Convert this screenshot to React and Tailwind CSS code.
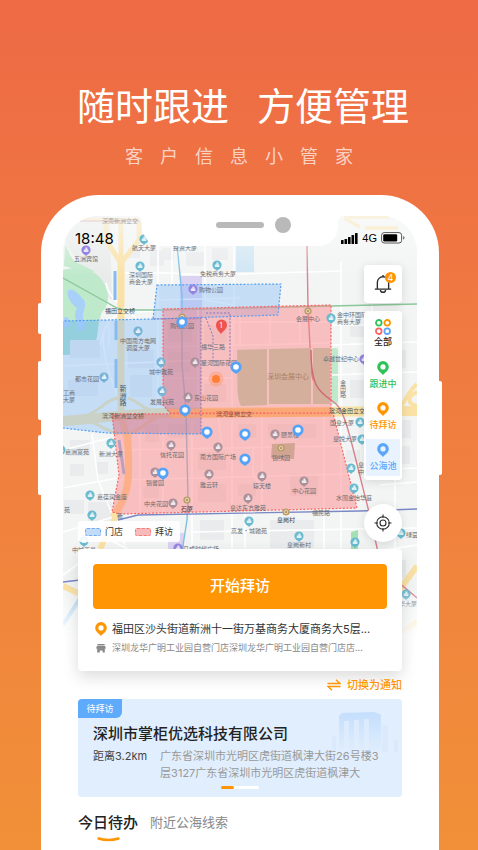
const POI_COLORS = { teal: '#6bbbd0', gray: '#ab8f9a', purple: '#9583e2', blue: '#78b3d6' };

const pois = [
  [86, 250, 'purple'], [144, 239, 'teal'], [140, 266, 'teal'], [217, 265, 'teal'], [193, 289, 'purple'],
  [138, 331, 'blue'], [195, 362, 'gray'], [161, 362, 'blue'], [104, 377, 'blue'], [162, 391, 'blue'],
  [188, 397, 'gray'], [61, 450, 'teal'], [111, 443, 'teal'], [171, 445, 'gray'], [218, 447, 'gray'],
  [155, 472, 'gray'], [209, 474, 'gray'], [90, 495, 'teal'], [173, 503, 'gray'], [248, 498, 'gray'],
  [249, 521, 'teal'], [92, 515, 'teal'], [331, 318, 'teal'], [364, 359, 'purple'], [360, 422, 'teal'],
  [362, 439, 'teal'], [351, 468, 'teal'], [275, 434, 'gray'], [262, 476, 'gray'], [304, 481, 'gray'],
  [354, 488, 'teal'], [299, 536, 'teal'], [401, 533, 'teal'], [355, 542, 'teal'], [84, 541, 'teal'],
  [178, 548, 'purple'], [406, 594, 'teal'],
];

const labels = [
  [120, 223, '深南新洲立交', '#a3a3a3'], [86, 261, '五洲宾馆'], [144, 250, '航天大厦'], [185, 250, '投资大厦'],
  [141, 277, '深圳国际'], [141, 284, '商会大厦'], [218, 276, '免税商务大厦'], [211, 292, '购物公园'],
  [120, 313, '福田立交桥', '#3f4448'], [138, 343, '中国南方电网'], [138, 350, '调度大厦'], [182, 328, '购物公园'],
  [213, 349, '福华三路'], [219, 365, '星河国际花园'], [161, 374, '城中雅苑'], [87, 381, '都市花园'],
  [69, 395, '工商'], [69, 402, '大厦'], [162, 404, '发展兴苑'], [206, 400, '东山花园'],
  [123, 418, '滨河新洲立交桥', '#5b5f55'], [234, 416, '滨河皇岗立交', '#80504a'],
  [77, 454, '嘉洲富苑'], [111, 456, '新洲大厦'], [172, 457, '信托花园'], [218, 459, '南方国际广场'],
  [155, 485, '锦馨园'], [209, 487, '雅云轩'], [112, 499, '嘉葆润金座'], [156, 506, '中央花园'],
  [187, 511, '石厦', '#54383c'], [248, 510, '皇达东方雅苑'], [249, 533, '高发·城驰苑'], [67, 512, '苑'],
  [120, 518, '新', '#46586b'], [308, 321, '会展中心'], [352, 317, '金中环国际'], [349, 324, '商务大厦'],
  [341, 361, '卓越世纪中心'], [347, 413, '滨河金田立交', '#41464c'],
  [342, 425, '国皇大厦'], [345, 441, '皇悦大厦'], [364, 467, '皇岗'], [364, 474, '中心'], [290, 437, '颐景楼'],
  [281, 460, '锦绣园'], [262, 488, '琼天楼'], [304, 493, '中心花园'], [354, 500, '水围金怡华庭'],
  [321, 515, '福民路'], [286, 522, '皇岗村', '#3f4448'], [299, 547, '皇岗新村'], [412, 537, '绿茵'],
  [84, 552, '中城天邑'], [201, 551, '马成时代广场'], [408, 606, '华大厦'],
];

const visitPins = [[182, 322], [236, 367], [185, 410], [207, 432], [163, 473], [245, 434], [245, 459], [298, 430]];

const minorRoads = [
  'M63 366L200 360', 'M158 245L158 410', 'M125 273H170L205 275L341 271', 'M172 245V284', 'M205 245V300L232 305V410',
  'M158 300L240 298', 'M234 245V345', 'M341 262V560', 'M163 347L331 343', 'M198 310V410', 'M163 378H232',
  'M331 345L417 342', 'M331 375L417 372', 'M372 304V440', 'M331 325H364', 'M63 488L118 478', 'M92 434L98 480L125 545',
  'M63 450L110 438', 'M140 420V512', 'M163 434V512', 'M192 420V560', 'M232 420V560', 'M262 416V510', 'M324 414V560',
  'M115 450L340 446', 'M118 480L350 474', 'M192 532L417 528', 'M63 532L120 515', 'M245 511V548', 'M370 470L417 468',
  'M380 485L417 482', 'M395 470V548', 'M63 575L110 540L150 560', 'M385 550L417 545', 'M270 345V308', 'M232 322H331',
  'M240 345V308', 'M300 345V308', 'M253 446V474L262 490V510', 'M218 414L222 446',
];

const buildings = [
  [128, 248, 12, 10], [150, 250, 14, 16], [186, 252, 18, 14], [162, 248, 12, 12], [212, 248, 16, 12], [70, 440, 20, 16],
  [70, 464, 14, 12], [96, 462, 12, 12], [64, 500, 20, 14], [88, 502, 24, 20], [200, 520, 24, 20], [270, 520, 44, 28],
  [350, 325, 14, 12], [376, 350, 30, 18], [350, 380, 14, 18], [377, 420, 34, 18], [374, 446, 36, 18], [346, 450, 14, 12],
  [128, 350, 26, 18], [130, 375, 22, 22], [70, 340, 30, 18], [68, 380, 30, 16], [168, 320, 24, 22], [168, 352, 22, 20],
  [204, 325, 22, 18], [204, 384, 22, 18], [145, 424, 14, 18], [168, 424, 20, 14], [198, 452, 28, 18], [238, 424, 18, 14],
  [268, 424, 48, 14], [290, 474, 28, 22], [198, 484, 28, 18], [143, 486, 16, 12], [238, 484, 18, 12], [380, 560, 26, 18],
];

function MapPoi({ x, y, kind }) {
  return (
    <g>
      <path d={`M${x - 3} ${y + 3}L${x} ${y + 6}L${x + 3} ${y + 3}Z`} fill={POI_COLORS[kind]} />
      <circle cx={x} cy={y} r="4.6" fill={POI_COLORS[kind]} />
      <path d={`M${x - 2.2} ${y + 2}v-2.6h1.6v-1.8h2v2h1v2.4z`} fill="#fff" opacity=".8" />
    </g>
  );
}

function CityMap() {
  return (
    <svg
      className="absolute inset-x-0 top-0 h-[430px] w-full"
      viewBox="63 216 354 430"
      preserveAspectRatio="xMidYMin slice"
      aria-label="拜访地图"
    >
      <defs>
        <linearGradient id="fadeBottom" x1="0" y1="0" x2="0" y2="1">
          <stop offset="0" stopColor="#fff" stopOpacity="0" />
          <stop offset=".8" stopColor="#fff" stopOpacity="1" />
        </linearGradient>
        <linearGradient id="fadeTop" x1="0" y1="0" x2="0" y2="1">
          <stop offset="0" stopColor="#fafafa" stopOpacity=".7" />
          <stop offset="1" stopColor="#fafafa" stopOpacity="0" />
        </linearGradient>
      </defs>
      <rect x="63" y="216" width="354" height="430" fill="#f3f5f5" />
      <path d="M63 216H110L112 300L98 290L66 245Z" fill="#e9ebeb" />
      <path d="M65 245C70 252 70 258 76 262L94 271L92 274L64 266Z" fill="#bfe9cb" />
      <path d="M63 270C75 266 94 268 102 280C110 292 110 305 102 312C98 322 98 340 92 350C84 357 74 354 63 355Z" fill="#bfe9cb" />
      <path d="M63 321L98 320C98 335 96 347 90 351C82 356 74 354 63 355Z" fill="#9cdcc8" />
      <path d="M68 290C74 287 80 296 84 300C88 308 80 312 84 320C88 328 80 334 77 330C79 322 72 318 77 308C72 304 66 298 68 290ZM64 318c4-3 6 2 7 8l-7 2z" fill="#a8d0f8" />
      <rect x="236" y="245" width="18" height="27" fill="#cfe6f4" />
      <rect x="180" y="276" width="22" height="44" fill="#dcd2f2" />
      <rect x="331" y="348" width="7" height="56" rx="2" fill="#bfe9cb" />
      <path d="M351 532L358 530V552H351Z" fill="#a5e0b4" />
      <path d="M168 533h16v16h-16z" fill="#dcd2f2" />
      <g fill="#e9ebec">
        {buildings.map(([x, y, w, h]) => (
          <rect key={`${x}-${y}`} x={x} y={y} width={w} height={h} rx="1" />
        ))}
      </g>
      <g fill="none" stroke="#fff" strokeWidth="1.6">
        {minorRoads.map((d) => (
          <path key={d} d={d} />
        ))}
        <path d="M106 283C112 310 132 300 140 330M100 345C108 310 118 312 160 311M108 345C114 320 100 318 104 350C108 380 118 390 122 410" />
      </g>
      <g fill="none" stroke="#fae2a6" strokeLinejoin="round">
        <path d="M80 220H140M344 218L360 227M365 228H398M344 217H390" strokeWidth="3.5" />
        <path d="M106 222V240L120 262M139 222V240L122 262M121 222V262" strokeWidth="5" />
        <path d="M121 256V405C121 425 127 430 128 450C129 480 130 490 113 517" strokeWidth="7" />
        <path d="M63 421C100 419 110 415 160 413L417 411" strokeWidth="10" />
        <path d="M85 416C100 412 104 400 118 398M128 398C140 402 144 410 156 412M92 422C104 428 110 432 120 434M130 434C140 430 146 422 156 418" strokeWidth="3" />
        <path d="M417 384C407 392 406 402 399 408M417 392C407 396 407 404 417 406" strokeWidth="4" />
        <path d="M63 586L84 596M100 549L118 512M398 592L417 566M392 640L417 622" strokeWidth="6" />
      </g>
      <path d="M63 625L84 592" stroke="#b0d8f5" strokeWidth="4" />
      <path d="M115 271V300M116 321V340M116 359V388M119 440L124 474" stroke="#85b9ef" strokeWidth="3" fill="none" />
      <path d="M80 221H140" stroke="#b48bb8" strokeWidth="1" />
      <path d="M63 278L108 303C116 308 120 310 130 310L163 310L331 306L417 304" fill="none" stroke="#8cc79a" strokeWidth="1.3" />
      <path d="M177 245L182 295V365L186 410L188 500L187 520L182 552" fill="none" stroke="#7fbfe0" strokeWidth="1.4" />
      <path d="M63 582L80 580M118 520L138 515L360 511L417 509" fill="none" stroke="#7a88c4" strokeWidth="1.3" />
      <path d="M307 245L308 308L311 365C311 385 318 391 335 403C346 412 350 438 368 508L378 552M398 582L417 598" fill="none" stroke="#d98290" strokeWidth="1.4" />

      <path d="M63 321L153 319L201 318V434L107 433L63 428Z" fill="#89bdf8" fillOpacity=".42" />
      <path d="M157 285L281 284L278 315L153 319Z" fill="#89bdf8" fillOpacity=".42" />
      <path d="M163 309L331 305V413H170L163 405Z" fill="#ff7f80" fillOpacity=".45" />
      <path d="M112 414L333 413L357 508L120 514L112 512L119 475Z" fill="#ff7f80" fillOpacity=".45" />
      <path d="M163 319L201 318V434H114L112 414H170L163 405Z" fill="#a0506e" fillOpacity=".14" />
      <g fill="#d4b09c">
        <path d="M237 350L267 349V405L241 406C236 396 238 386 237 350Z" />
        <path d="M269 349L311 348V404H269Z" />
        <path d="M313 348H330V404H313Z" />
        <path d="M272 444L295 443L294 459L271 458Z" fill="#d2a593" />
      </g>
      <path d="M311 350C311 385 318 391 331 400" fill="none" stroke="#cf6670" strokeWidth="1.4" />
      <path d="M128 434C129 480 131 488 117 512" fill="none" stroke="#fba97c" strokeOpacity=".5" strokeWidth="7" />
      <path d="M170 413.500L331 412" stroke="#fba36b" strokeOpacity=".7" strokeWidth="9" />
      <g fill="none" strokeWidth="1.2" strokeDasharray="2 1.6">
        <path d="M153 319L63 321M63 428L107 433L201 434M157 285L281 284L278 315L153 319Z" stroke="#539ff2" />
        <path d="M153 319L201 318V434M206 313H230V365M206 318L213 336V362" stroke="#8478bd" strokeWidth="1" />
        <path d="M163 309L331 305V413H170L163 405ZM112 414L333 413L357 508L120 514L112 512L119 475Z" stroke="#fa6566" />
      </g>
      <rect x="63" y="216" width="354" height="60" fill="url(#fadeTop)" />

      {pois.map(([x, y, kind]) => (
        <MapPoi key={`${x}-${y}`} x={x} y={y} kind={kind} />
      ))}
      {[[182, 317], [308, 311], [187, 500], [281, 448], [286, 512]].map(([x, y]) => (
        <g key={`${x}-${y}`}>
          <circle cx={x} cy={y} r="3.6" fill="#b79a66" />
          <circle cx={x} cy={y} r="1.8" fill="none" stroke="#f5e6c6" strokeWidth=".8" />
        </g>
      ))}
      <g className="font-['Noto_Sans_CJK_SC',sans-serif] text-[6px]" textAnchor="middle" fill="#6a6d73">
        {labels.map(([x, y, text, color]) => (
          <text key={`${x}-${y}`} x={x} y={y} fill={color}>{text}</text>
        ))}
        <text x="288" y="379" className="text-[7px]" fill="#a98069">深圳会展中心</text>
        <text x="123" y="395" className="text-[7px] [writing-mode:vertical-rl]" fill="#46586b">新洲路</text>
        <text x="343" y="389" className="[writing-mode:vertical-rl]">金田路</text>
      </g>

      <path d="M221 334C219 331 216 329 216 325A5.4 5.4 0 0 1 227 325C227 329 223 331 221 334Z" fill="#ee5350" />
      <text x="221" y="328" textAnchor="middle" fill="#fff" className="font-['Inter',sans-serif] text-[7px]">1</text>
      <circle cx="216" cy="379" r="7.5" fill="#ff7e35" fillOpacity=".25" />
      <circle cx="216" cy="379" r="4" fill="#ff7e35" />
      {visitPins.map(([x, y]) => (
        <g key={`${x}-${y}`}>
          <path d={`M${x - 5} ${y + 2}Q${x - 3} ${y + 5} ${x} ${y + 7}Q${x + 3} ${y + 5} ${x + 5} ${y + 2}Z`} fill="#55a3f8" />
          <circle cx={x} cy={y} r="5.6" fill="#55a3f8" />
          <circle cx={x} cy={y} r="2.8" fill="#fff" />
        </g>
      ))}
      <rect x="63" y="588" width="354" height="60" fill="url(#fadeBottom)" />
    </svg>
  );
}

function PinIcon({ className }) {
  return (
    <svg viewBox="0 0 12 14" className={className} fill="currentColor" aria-hidden="true">
      <path fillRule="evenodd" d="M6 0A5.8 5.8 0 0 1 11.8 5.8C11.8 9 9 11 6 14C3 11 .2 9 .2 5.8A5.8 5.8 0 0 1 6 0ZM6 3.3A2.6 2.6 0 1 0 6 8.5A2.6 2.6 0 1 0 6 3.3Z" />
    </svg>
  );
}

function Notch() {
  return (
    <div className="absolute inset-x-0 top-0 flex justify-center">
      <svg viewBox="0 0 204 31" className="h-[31px] w-[204px]" aria-hidden="true">
        <path d="M0 0H204C200 2 200 6 200 9C200 22 192 30 178 30H26C12 30 4 22 4 9C4 6 4 2 0 0Z" fill="#fff" />
        <rect x="78" y="6" width="48" height="6" rx="3" fill="#b9b9b9" />
        <circle cx="145" cy="9" r="8" fill="#b9b9b9" />
      </svg>
    </div>
  );
}

function StatusBar() {
  return (
    <div className="relative flex h-[44px] items-center justify-between px-[12px] text-black">
      <span className="text-[15px] leading-none">18:48</span>
      <div className="flex items-center gap-[4px]">
        <svg viewBox="0 0 17 11" className="h-[11px] w-[17px]" aria-hidden="true">
          <rect x="0" y="7" width="2.6" height="4" rx=".6" />
          <rect x="3.5" y="6" width="2.6" height="5" rx=".6" />
          <rect x="7" y="4" width="2.6" height="7" rx=".6" />
          <rect x="10.5" y="2" width="2.6" height="9" rx=".6" />
          <rect x="14" y="0" width="2.6" height="11" rx=".6" />
        </svg>
        <span className="font-['Liberation_Sans',sans-serif] text-[11px] leading-none">4G</span>
        <svg viewBox="0 0 24 12" className="h-[12px] w-[24px]" aria-hidden="true">
          <rect x=".6" y=".6" width="20" height="10.4" rx="2.6" fill="#fff" stroke="#555" />
          <rect x="2.2" y="2.2" width="14" height="7.2" rx="1.2" />
          <path d="M22 4Q23.6 4.4 23.6 5.8Q23.6 7.2 22 7.6Z" fill="#777" />
        </svg>
      </div>
    </div>
  );
}

const filters = [
  { name: '跟进中', color: 'text-[#2fc25b]' },
  { name: '待拜访', color: 'text-[#ff9502]' },
  { name: '公海池', color: 'text-[#5aa6fb]', active: true },
];

function MapControls() {
  return (
    <div className="relative mt-[5px] flex flex-col items-end gap-2">
      <button type="button" aria-label="消息" className="relative flex size-[38px] items-center justify-center rounded bg-white shadow-[0_2px_10px_rgba(0,0,0,0.12)]">
        <svg viewBox="0 0 20 22" className="size-[20px]" fill="none" stroke="#2b2b2b" strokeWidth="1.5" aria-hidden="true">
          <path d="M3.8 16.5V9.2A6.2 6.2 0 0 1 16.2 9.2V16.5M1 16.6H19M10 3V1.2" />
          <path d="M7.2 17.5C7.2 21 12.8 21 12.8 17.5" />
        </svg>
        <span className="absolute top-[7px] right-[6px] flex size-[11px] items-center justify-center rounded-full bg-[#ff9502] text-[9px] leading-none text-white">4</span>
      </button>
      <div className="flex w-[38px] flex-col rounded bg-white/95 p-[2px] pb-[4px] text-[9px] leading-[13px] font-medium shadow-[0_2px_10px_rgba(0,0,0,0.12)]">
        <button type="button" className="flex h-[40px] flex-col items-center pt-[6px] text-[#222]">
          <svg viewBox="0 0 16 16" className="size-[16px]" fill="none" strokeWidth="1.8" aria-hidden="true">
            <circle cx="3.8" cy="3.8" r="2.8" stroke="#2fc25b" />
            <circle cx="12.2" cy="3.8" r="2.8" stroke="#ff9502" />
            <circle cx="3.8" cy="12.2" r="2.8" stroke="#ff6464" />
            <circle cx="12.2" cy="12.2" r="2.8" stroke="#5aa6fb" />
          </svg>
          全部
        </button>
        {filters.map((filter) => (
          <button
            key={filter.name}
            type="button"
            className={`mt-[4px] flex h-[37px] flex-col items-center gap-[2px] pt-[4px] ${filter.color} ${filter.active ? 'bg-[#e9f3ff]' : ''}`}
          >
            <PinIcon className="h-[14px] w-[12px]" />
            {filter.name}
          </button>
        ))}
      </div>
    </div>
  );
}

function MapFooter() {
  return (
    <div className="relative mt-[24px] flex items-end justify-between">
      <div className="flex h-[21px] items-center gap-[12px] rounded-[3px] bg-white/90 px-[7px] text-[9px] text-[#333]">
        <span className="flex items-center gap-[4px]">
          <i className="h-[8px] w-[16px] rounded-[2px] border border-dashed border-[#6cacf5] bg-[#c2dbf8]" />
          门店
        </span>
        <span className="flex items-center gap-[4px]">
          <i className="h-[8px] w-[16px] rounded-[2px] border border-dashed border-[#f47c7c] bg-[#f8b9b9]" />
          拜访
        </span>
      </div>
      <button type="button" aria-label="定位" className="flex size-[38px] items-center justify-center rounded-full bg-white shadow-[0_2px_10px_rgba(0,0,0,0.12)]">
        <svg viewBox="0 0 18 18" className="size-[18px]" fill="none" stroke="#2b2b2b" strokeWidth="1.1" aria-hidden="true">
          <circle cx="9" cy="9" r="6.3" />
          <circle cx="9" cy="9" r="3" />
          <path d="M9 .5V4M9 14V17.5M.5 9H4M14 9H17.5" />
        </svg>
      </button>
    </div>
  );
}

function VisitCard() {
  return (
    <section className="relative mt-[7px] rounded bg-white p-[15px] pb-[14px] shadow-[0_6px_16px_rgba(0,0,0,0.14)]">
      <button type="button" className="flex h-[45px] w-full items-center justify-center rounded bg-[#ff9502] text-[15px] font-medium text-white">
        开始拜访
      </button>
      <div className="mt-[10px] flex h-[20px] items-center gap-[5px] text-[11px] text-[#333]">
        <PinIcon className="ml-[2px] h-[14px] w-[12px] shrink-0 text-[#ff9502]" />
        <span className="whitespace-nowrap">福田区沙头街道新洲十一街万基商务大厦商务大5层...</span>
      </div>
      <div className="flex h-[18px] items-center gap-[6px] text-[9px] text-[#888]">
        <svg viewBox="0 0 10 9" className="ml-[3px] h-[9px] w-[10px] shrink-0" fill="#888" aria-hidden="true">
          <path d="M1.4 0H8.6V1.4H1.4ZM1 2H9L9.8 4Q9.4 5.2 8.4 4.8Q7.6 5.4 6.8 4.8Q5.8 5.4 5 4.8Q4.2 5.4 3.2 4.8Q2.4 5.4 1.6 4.8Q.6 5.2 .2 4Z" />
          <path d="M1.2 5H8.8V8.6H6.6V6.4H3.8V8.6H1.2Z" />
        </svg>
        <span className="whitespace-nowrap">深圳龙华广明工业园自营门店深圳龙华广明工业园自营门店店...</span>
      </div>
    </section>
  );
}

function CompanyCard() {
  return (
    <section className="relative h-[98px] overflow-hidden rounded bg-[#e0eefd]">
      <svg viewBox="0 0 72 46" className="absolute top-[11px] right-0 h-[46px] w-[72px]" aria-hidden="true">
        <defs>
          <linearGradient id="tower" x1="0" y1="0" x2="0" y2="1">
            <stop offset="0" stopColor="#c4defc" />
            <stop offset="1" stopColor="#e0eefd" />
          </linearGradient>
        </defs>
        <path d="M9 6L12 3L44 2L51 5V42H9Z" fill="url(#tower)" />
        <path d="M44 2L51 5V42H46V6Z" fill="url(#tower)" />
        <path d="M52 15H58V42H52ZM2 26H6V42H2ZM64 30H68V42H64Z" fill="#d3e6fc" opacity=".5" />
        <path d="M14 11H19V40H14ZM24 10H29V40H24ZM34 9H39V40H34Z" fill="#e0eefd" opacity=".8" />
      </svg>
      <div className="relative">
        <span className="flex h-[19px] w-[44px] items-center justify-center rounded-br-[6px] bg-[#5fabfb] text-[9px] text-white">待拜访</span>
        <div className="px-[15px]">
          <h2 className="mt-[4px] text-[15px] leading-[24px] font-medium text-[#222]">深圳市掌柜优选科技有限公司</h2>
          <div className="mt-[2px] flex gap-[13px] text-[11px] leading-[17px]">
            <span className="shrink-0 text-[#444]">距离3.2km</span>
            <p className="text-[#999]">广东省深圳市光明区虎街道枫津大街26号楼3层3127广东省深圳市光明区虎街道枫津大</p>
          </div>
        </div>
        <div className="mx-auto mt-[4px] h-[3px] w-[38px] rounded-full bg-white">
          <div className="h-[3px] w-[13px] rounded-full bg-[#ff9502]" />
        </div>
      </div>
    </section>
  );
}

function Phone() {
  return (
    <main className="relative mr-[39px] ml-[41px] flex-1 rounded-t-[58px] bg-white px-[22px] pt-[21px]">
      <div className="absolute top-[108px] -left-[3px] h-[31px] w-[4px] rounded-l-[2px] bg-white" />
      <div className="absolute top-[166px] -left-[3px] h-[59px] w-[4px] rounded-l-[2px] bg-white" />
      <div className="absolute top-[240px] -left-[3px] h-[60px] w-[4px] rounded-l-[2px] bg-white" />
      <div className="absolute top-[186px] -right-[3px] h-[94px] w-[4px] rounded-r-[2px] bg-white" />
      <div className="relative overflow-hidden rounded-t-[36px] bg-white">
        <CityMap />
        <Notch />
        <StatusBar />
        <div className="px-[15px]">
          <MapControls />
          <MapFooter />
          <VisitCard />
          <button type="button" className="relative mt-[4px] ml-auto flex h-[20px] items-center gap-[6px] text-[11px] font-medium text-[#ff9502]">
            <svg viewBox="0 0 14 12" className="h-[12px] w-[14px]" fill="none" stroke="currentColor" strokeWidth="1.3" aria-hidden="true">
              <path d="M.5 4.5H13L9 .8M13.5 7.5H1L5 11.2" />
            </svg>
            切换为通知
          </button>
          <div className="mt-[4px]">
            <CompanyCard />
          </div>
          <nav className="mt-[15px] flex h-[38px] items-start gap-[12px]">
            <a href="#today" className="flex flex-col items-center text-[15px] leading-[22px] font-medium text-[#222]">
              今日待办
              <svg viewBox="0 0 23 5" className="mt-[3px] h-[5px] w-[23px]" fill="none" aria-hidden="true">
                <path d="M1.5 1.5Q11.5 4.5 21.5 1.5" stroke="#ff9502" strokeWidth="2.4" strokeLinecap="round" />
              </svg>
            </a>
            <a href="#nearby" className="text-[13px] leading-[21px] text-[#888]">附近公海线索</a>
          </nav>
        </div>
      </div>
    </main>
  );
}

export default function App() {
  return (
    <div className="flex min-h-screen flex-col overflow-hidden bg-linear-to-b from-[#ee6a45] to-[#f19038] font-['Inter','Noto_Sans_CJK_SC',sans-serif]">
      <header className="flex h-[195px] flex-col items-center pt-[78px] text-white">
        <h1 className="flex gap-[28px] pl-[8px] text-[38px] leading-[56px]">
          <span>随时跟进</span>
          <span>方便管理</span>
        </h1>
        <p className="mt-[10px] flex gap-[17px] text-[18px] leading-[26px] text-white/70">
          {Array.from('客户信息小管家').map((char) => (
            <span key={char}>{char}</span>
          ))}
        </p>
      </header>
      <Phone />
    </div>
  );
}
